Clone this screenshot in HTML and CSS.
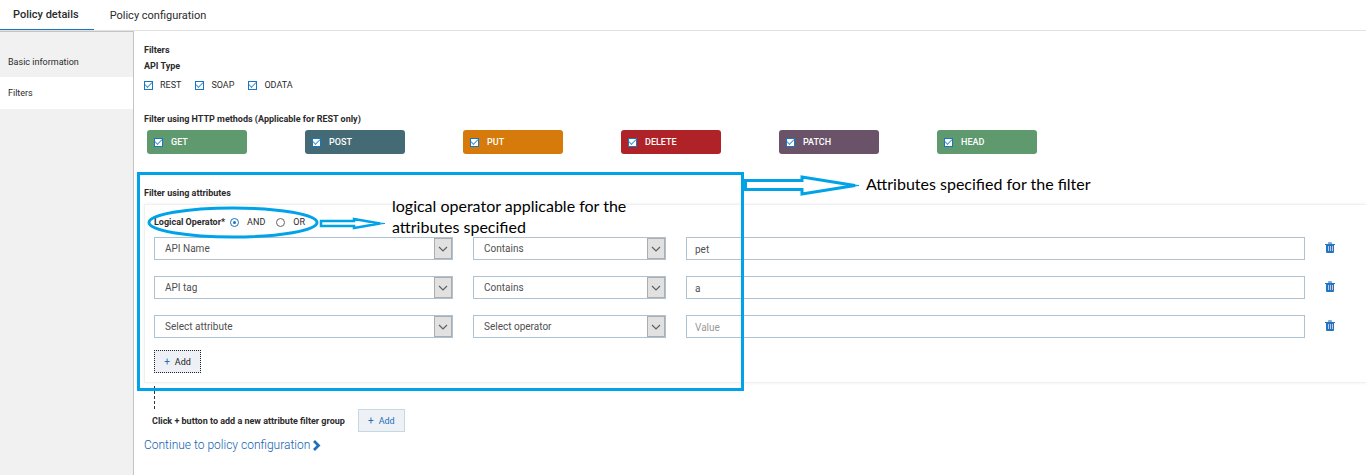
FILE: index.html
```html
<!DOCTYPE html>
<html lang="en">
<head>
<meta charset="utf-8">
<title>Policy details</title>
<link rel="stylesheet" href="styles.css">
</head>
<body>
<svg class="defs" aria-hidden="true">
  <symbol id="trash" viewBox="0 0 10 11">
    <path d="M3 2V1a1 1 0 0 1 1-1h2a1 1 0 0 1 1 1v1" fill="#7fa9d6"/>
    <path d="M0 2h10v1H9v7a1 1 0 0 1-1 1H2a1 1 0 0 1-1-1V3H0z" fill="#1f76c2"/>
    <path d="M3 4h1v5H3zM5 4h1v5H5zM7 4h1v5H7z" fill="#d3bfd6"/>
  </symbol>
  <symbol id="chevron" viewBox="0 0 10 6">
    <path d="M1 1l4 4 4-4" fill="none" stroke="#606060" stroke-width="1.2"/>
  </symbol>
</svg>
<div class="page">
  <nav class="tabs">
    <a class="tab active" href="#details">Policy details</a>
    <a class="tab" href="#configuration">Policy configuration</a>
  </nav>
  <div class="body">
    <nav class="sidebar">
      <a class="side-link" href="#basic">Basic information</a>
      <a class="side-link current" href="#filters">Filters</a>
    </nav>
    <main class="content">
      <h1 class="heading">Filters</h1>
      <h2 class="heading">API Type</h2>
      <div class="types">
        <label class="option"><input class="check" type="checkbox" checked>REST</label>
        <label class="option"><input class="check" type="checkbox" checked>SOAP</label>
        <label class="option"><input class="check" type="checkbox" checked>ODATA</label>
      </div>
      <h2 class="heading">Filter using HTTP methods (Applicable for REST only)</h2>
      <div class="methods">
        <label class="method get"><input class="check" type="checkbox" checked>GET</label>
        <label class="method post"><input class="check" type="checkbox" checked>POST</label>
        <label class="method put"><input class="check" type="checkbox" checked>PUT</label>
        <label class="method delete"><input class="check" type="checkbox" checked>DELETE</label>
        <label class="method patch"><input class="check" type="checkbox" checked>PATCH</label>
        <label class="method head"><input class="check" type="checkbox" checked>HEAD</label>
      </div>
      <h2 class="heading">Filter using attributes</h2>
      <section class="group">
        <div class="logic" role="radiogroup" aria-labelledby="logic-label">
          <span class="logic-label" id="logic-label">Logical Operator*</span>
          <label class="choice"><input class="radio" type="radio" name="logic" checked>AND</label>
          <label class="choice"><input class="radio" type="radio" name="logic">OR</label>
        </div>
        <div class="rows">
          <div class="row">
            <div class="picker"><select class="field" aria-label="Attribute"><option>API Name</option></select><span class="arrow"><svg width="10" height="6"><use href="#chevron"/></svg></span></div>
            <div class="picker"><select class="field" aria-label="Operator"><option>Contains</option></select><span class="arrow"><svg width="10" height="6"><use href="#chevron"/></svg></span></div>
            <input class="field" type="text" aria-label="Value" value="pet">
            <button class="remove" type="button" aria-label="Delete"><svg width="10" height="11"><use href="#trash"/></svg></button>
          </div>
          <div class="row">
            <div class="picker"><select class="field" aria-label="Attribute"><option>API tag</option></select><span class="arrow"><svg width="10" height="6"><use href="#chevron"/></svg></span></div>
            <div class="picker"><select class="field" aria-label="Operator"><option>Contains</option></select><span class="arrow"><svg width="10" height="6"><use href="#chevron"/></svg></span></div>
            <input class="field" type="text" aria-label="Value" value="a">
            <button class="remove" type="button" aria-label="Delete"><svg width="10" height="11"><use href="#trash"/></svg></button>
          </div>
          <div class="row">
            <div class="picker"><select class="field" aria-label="Attribute"><option>Select attribute</option></select><span class="arrow"><svg width="10" height="6"><use href="#chevron"/></svg></span></div>
            <div class="picker"><select class="field" aria-label="Operator"><option>Select operator</option></select><span class="arrow"><svg width="10" height="6"><use href="#chevron"/></svg></span></div>
            <input class="field" type="text" aria-label="Value" placeholder="Value">
            <button class="remove" type="button" aria-label="Delete"><svg width="10" height="11"><use href="#trash"/></svg></button>
          </div>
        </div>
        <button class="add focused" type="button"><span class="plus">+</span>Add</button>
      </section>
      <div class="connector"></div>
      <div class="new-group">
        <span>Click + button to add a new attribute filter group</span>
        <button class="add" type="button"><span class="plus">+</span>Add</button>
      </div>
      <a class="continue" href="#configuration">Continue to policy configuration
        <svg width="8" height="11" viewBox="0 0 8 11"><path d="M1 1l4.500 4.500L1 10" fill="none" stroke="#1f70b8" stroke-width="2.800"/></svg>
      </a>
    </main>
  </div>
  <div class="notes">
    <svg class="marks" width="900" height="400" fill="none" stroke="#00a2e8" stroke-width="3" aria-hidden="true">
      <rect x="138.500" y="173.500" width="604" height="216"/>
      <ellipse cx="233" cy="222.500" rx="84" ry="14.500" stroke-width="3"/>
      <path d="M745.500 180.500H802V177L855 185.500L802 194V189.500H745.500z"/>
      <path d="M850 184.700L859 185.500L850 186.300z" stroke-width="1"/>
      <path d="M321 221H354V219L380 223.500L354 228V226H321z" stroke-width="2.500"/>
      <path d="M374 222.500L385 223.500L374 224.500z" stroke-width="1"/>
    </svg>
    <p class="note note-filter">Attributes specified for the filter</p>
    <p class="note note-logic">logical operator applicable for the<br>attributes specified</p>
  </div>
</div>
</body>
</html>
```
FILE: styles.css
```css
* { box-sizing: border-box; }
body { margin: 0; font: 9px/16px Roboto, "Liberation Sans", sans-serif; color: #2b2b2b; background: #fff; }
a { color: inherit; text-decoration: none; }
button, input, select { font: inherit; color: inherit; margin: 0; }
.defs { position: absolute; width: 0; height: 0; }
.page { position: relative; min-height: 100vh; display: flex; flex-direction: column; overflow: hidden; }

.tabs { display: flex; height: 31px; border-bottom: 1px solid #e2e2e2; font-size: 11px; }
.tab { padding: 8px 16px 0; line-height: 16px; height: 30px; }
.tab.active { padding: 7px 15px 0 13px; font-weight: 500; border-bottom: 1px solid #1776bf; }

.body { flex: 1; display: flex; }
.sidebar { flex: none; width: 134px; padding-top: 15px; background: #f1f1f1; border-top: 1px solid #c4c4c4; border-right: 1px solid #c4c4c4; }
.side-link { display: block; padding: 7px 8px; }
.side-link.current { padding: 8px; background: #fff; }

.content { flex: 1; min-width: 0; padding: 11px 0 0 10px; }
.heading { margin: 0; font-size: 9px; line-height: 16px; font-weight: 700; }
.types { display: flex; gap: 14px; margin: 3px 0 18px; }
.option { display: flex; align-items: center; gap: 7px; }
.check { appearance: none; flex: none; width: 9px; height: 9px; border: 1px solid #1776bf; background: #fff; display: grid; place-items: center; }
.check:checked::before { content: ""; width: 6px; height: 3px; border: solid #4a94cd; border-width: 0 0 1px 1px; transform: rotate(-45deg); margin-bottom: 2px; }

.methods { display: grid; grid-template-columns: repeat(6, 158px); margin: 3px 3px 31px; }
.method { display: flex; align-items: center; gap: 8px; width: 100px; height: 24px; padding-left: 7px; border-radius: 3px; color: #fff; font-weight: 500; }
.get, .head { background: #5f996e; }
.post { background: #446b75; }
.put { background: #d67b0b; }
.delete { background: #af2228; }
.patch { background: #6a5368; }

.group { padding: 9px 0 9px 9px; border: 1px solid #f0f0f0; border-right: 0; box-shadow: 0 0 3px #eee; margin-top: 3px; }
.logic { display: flex; align-items: center; }
.logic-label { font-weight: 700; }
.choice { display: flex; align-items: center; gap: 8px; margin-left: 5px; }
.choice + .choice { margin-left: 11px; }
.radio { appearance: none; width: 9px; height: 9px; border: 1px solid #666; border-radius: 50%; display: grid; place-items: center; }
.radio:checked { border-color: #1776bf; }
.radio:checked::before { content: ""; width: 3px; height: 3px; border-radius: 50%; background: #1776bf; }

.rows { display: grid; gap: 16px; margin: 7px 0 12px; }
.row { display: grid; grid-template-columns: 299fr 193fr 619fr 61px; column-gap: 20px; margin-right: -20px; height: 23px; }
.picker { display: grid; }
.picker > * { grid-area: 1 / 1; }
.field { appearance: none; width: 100%; height: 23px; min-width: 0; padding: 1px 10px 0; border: 1px solid #adc2d3; border-radius: 0; background: #fff; color: #505050; font-size: 10px; outline: 0; }
input.field { padding: 1px 8px 0; }
.field::placeholder { color: #999; opacity: 1; }
.arrow { justify-self: end; display: grid; place-items: center; width: 18px; margin: 1px; background: #e1e1e1; border: 1px solid #adadad; pointer-events: none; }
.remove { justify-self: start; display: grid; place-items: center; width: 10px; height: 20px; padding: 0; border: 0; background: none; }

.add { display: flex; align-items: center; justify-content: center; gap: 5px; width: 47px; height: 23px; padding: 0; border: 1px solid #c5d9e5; background: #edf1f5; color: #1f70b8; }
.add.focused { border: 1px dotted #222; color: #222; }
.plus { color: #1f70b8; font-size: 10px; }
.connector { width: 1px; height: 23px; margin: 3px 0 0 10px; background: repeating-linear-gradient(#333 0 3px, transparent 3px 5px); }
.new-group { display: flex; align-items: center; gap: 13px; margin-left: 8px; font-weight: 700; }
.new-group .add { font-weight: 400; }
.continue { display: inline-flex; align-items: center; gap: 3px; margin-top: 5px; font-size: 12px; font-weight: 300; color: #0f62b0; }

/* Callouts drawn over the form */
.notes { position: absolute; inset: 0; pointer-events: none; }
.marks { position: absolute; left: 0; top: 0; }
.note { position: absolute; margin: 0; font: 16px/21px Lato, "Open Sans", sans-serif; color: #000; white-space: nowrap; }
.note-filter { left: 866px; top: 173px; }
.note-logic { left: 392px; top: 195px; }
```
